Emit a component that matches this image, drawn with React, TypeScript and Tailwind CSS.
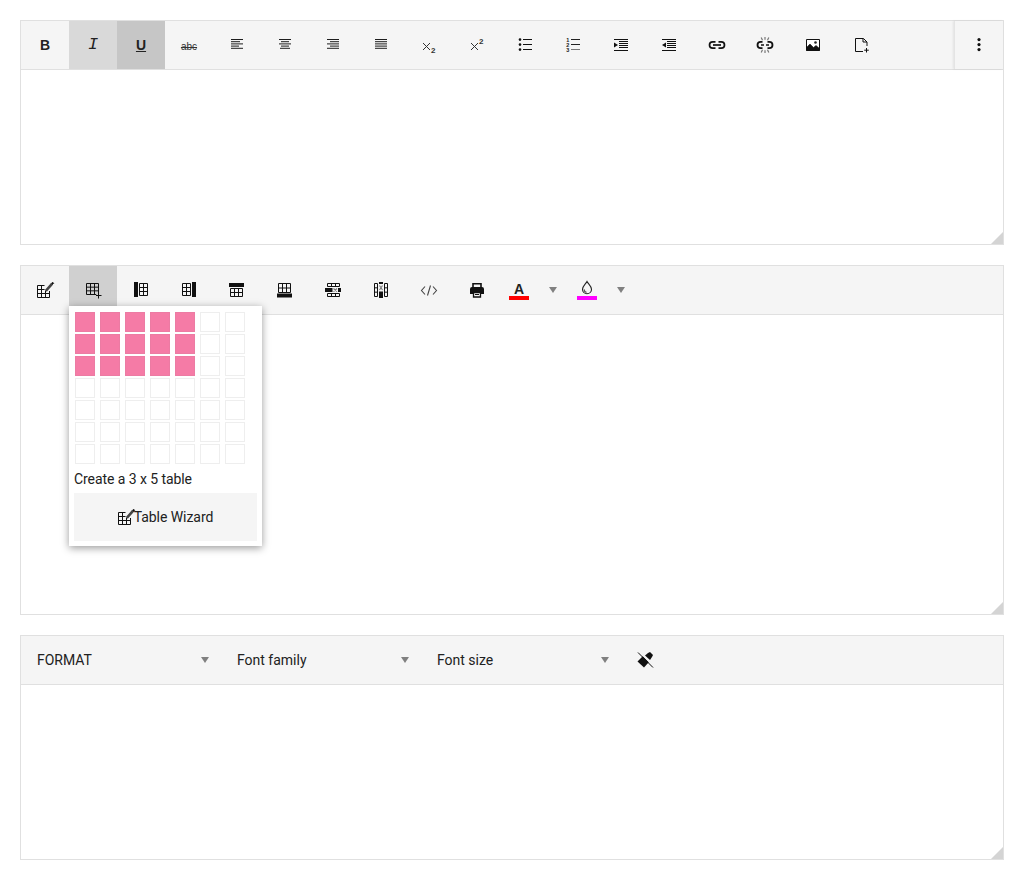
import React from "react";

const D = "#212121";

function Ico({ children }: { children: React.ReactNode }) {
  return (
    <svg width="24" height="24" viewBox="0 0 24 24" fill="none" stroke={D} strokeWidth="1" className="block">
      {children}
    </svg>
  );
}

function Btn({ children, bg = "" }: { children: React.ReactNode; bg?: string }) {
  return <div className={`w-12 h-12 shrink-0 flex items-center justify-center ${bg}`}>{children}</div>;
}

function Lines({ spec }: { spec: [number, number][] }) {
  return (
    <Ico>
      {spec.map(([a, b], i) => (
        <path key={i} d={`M${a} ${6.5 + i * 2.2}H${b}`} strokeWidth="0.95" stroke="#111" />
      ))}
    </Ico>
  );
}

function Script({ sup }: { sup?: boolean }) {
  return (
    <Ico>
      <path d="M6 10l7 7M13 10l-7 7" strokeWidth="1" stroke="#333" />
      <text
        x="14"
        y={sup ? 10.5 : 19.5}
        fontSize="8"
        fontWeight="700"
        fontFamily="'Liberation Sans', sans-serif"
        fill="#333"
        stroke="none"
      >
        2
      </text>
    </Ico>
  );
}

function Grid({ x, y, w, h, cols, rows }: { x: number; y: number; w: number; h: number; cols: number; rows: number }) {
  const v = Array.from({ length: cols + 1 }, (_, i) => x + (w * i) / cols);
  const r = Array.from({ length: rows + 1 }, (_, i) => y + (h * i) / rows);
  return (
    <g strokeWidth="1">
      {v.map((a) => (
        <path key={"v" + a} d={`M${a} ${y}V${y + h}`} />
      ))}
      {r.map((b) => (
        <path key={"h" + b} d={`M${x} ${b}H${x + w}`} />
      ))}
    </g>
  );
}

const Bullets = () => (
  <Ico>
    <g fill="#111" stroke="none">
      <circle cx="7" cy="6.6" r="1.3" />
      <circle cx="7" cy="11.6" r="1.3" />
      <circle cx="7" cy="16.6" r="1.3" />
    </g>
    <path d="M10 6.500h9M10 11.500h9M10 16.500h9" stroke="#111" />
  </Ico>
);

const Numbers = () => (
  <Ico>
    <g fontSize="5.500" fontWeight="700" fontFamily="'Liberation Sans', sans-serif" fill="#222" stroke="none">
      <text x="5.200" y="8.500">1</text>
      <text x="5.200" y="13.500">2</text>
      <text x="5.200" y="18.500">3</text>
    </g>
    <path d="M10 6.500h9M10 11.500h9" stroke="#222" />
    <path d="M10 16.500h9" stroke="#777" />
  </Ico>
);

const Indent = ({ out }: { out?: boolean }) => (
  <Ico>
    <path d="M5 6.500h14M10 8.500h9M10 10.500h9M10 12.500h9M10 14.500h9M5 17.500h14" stroke="#111" />
    <path d={out ? "M9 9.500v5l-4-2.500z" : "M5 9.500v5l4-2.500z"} fill="#111" stroke="none" />
  </Ico>
);

const LinkIcon = () => (
  <Ico>
    <g strokeWidth="1.700" stroke="#111">
      <path d="M10.500 8.800H7.700a3.200 3.200 0 0 0 0 6.400h2.800M13.500 8.800h2.800a3.200 3.200 0 0 1 0 6.400h-2.800" />
      <path d="M8 12h8" />
    </g>
  </Ico>
);

const Unlink = () => (
  <Ico>
    <path d="M9.500 8.800H7.700a3.200 3.200 0 0 0 0 6.400h1.800M14.500 8.800h1.800a3.200 3.200 0 0 1 0 6.400h-1.800" strokeWidth="1.800" stroke="#111" />
    <path d="M8 12h3M13 12h3" strokeWidth="1.400" stroke="#111" />
    <path d="M9.500 7.200L8.200 4.500M12 6.800V4M14.500 7.200l1.300-2.700M9.500 16.800l-1.300 2.700M12 17.200V20M14.500 16.800l1.300 2.700" stroke="#777" strokeWidth="1.200" />
  </Ico>
);

const ImageIcon = () => (
  <Ico>
    <path d="M5.500 6.500h13v11h-13z" fill="#fff" stroke="#111" strokeWidth="1" />
    <path d="M5.500 17.500v-3l3.500-3.500 3.500 3.500 2.500-2 3.500 3v2z" fill="#111" stroke="#111" strokeWidth="0.6" />
    <circle cx="14.500" cy="9.500" r="1.300" fill="#222" stroke="none" />
  </Ico>
);

const NewFile = () => (
  <Ico>
    <path d="M14 18.500H6.500v-13h8l3.500 3.500v4M14 5.500V9h4" stroke="#111" strokeWidth="1" />
    <path d="M17.500 15v4.500M15.200 17.200h4.600" stroke="#111" />
  </Ico>
);

const More = () => (
  <Ico>
    <g fill="#111" stroke="none">
      <circle cx="12" cy="6.600" r="1.600" />
      <circle cx="12" cy="11.600" r="1.600" />
      <circle cx="12" cy="16.600" r="1.600" />
    </g>
  </Ico>
);

const Wizard = () => (
  <svg width="24" height="24" viewBox="0 0 24 24" fill="none" className="block shrink-0">
    <path
      d="M4.500 7.500h7M4.500 7.500v12M4.500 11.500h8M4.500 15.500h12M4.500 19.500h12M8.500 7.500v12M12.500 11.500v8M16.500 13v6.500"
      stroke="#111"
    />
    <path d="M12.800 12.800l6-6.600" stroke="#f5f5f5" strokeWidth="4" />
    <path d="M12.800 12.800l6-6.600" stroke="#444" strokeWidth="2.600" />
    <path d="M18.300 5.500l1.300-1.300 1.100 1.100-1.300 1.300z" fill="#111" stroke="#111" strokeWidth="0.8" />
  </svg>
);

const TableAdd = () => (
  <Ico>
    <g stroke="#111">
      <Grid x={5.5} y={5.5} w={12} h={11} cols={3} rows={3} />
      <path d="M17.500 15v5.500M15 17.700h5.500" stroke="#d0d0d0" strokeWidth="3" />
      <path d="M17.500 15v5.500M15 17.500h5.500" />
    </g>
  </Ico>
);

const ColBefore = () => (
  <Ico>
    <path d="M5 4h4v15H5z" fill="#111" stroke="none" />
    <g stroke="#111"><Grid x={10.5} y={5.5} w={8} h={12} cols={2} rows={3} /></g>
  </Ico>
);

const ColAfter = () => (
  <Ico>
    <g stroke="#111"><Grid x={5.5} y={5.5} w={8} h={12} cols={2} rows={3} /></g>
    <path d="M15 4h4v15h-4z" fill="#111" stroke="none" />
  </Ico>
);

const RowBefore = () => (
  <Ico>
    <path d="M4 5h15v4H4z" fill="#111" stroke="none" />
    <g stroke="#111"><Grid x={5.5} y={10.5} w={12} h={8} cols={3} rows={2} /></g>
  </Ico>
);

const RowAfter = () => (
  <Ico>
    <g stroke="#111"><Grid x={5.5} y={5.5} w={12} h={9} cols={3} rows={2} /></g>
    <path d="M4 15.500h15v4H4z" fill="#111" stroke="none" />
  </Ico>
);

const DelRow = () => (
  <Ico>
    <g stroke="#111">
      <Grid x={6.5} y={5.5} w={12} h={3} cols={3} rows={1} />
      <Grid x={6.5} y={15.5} w={12} h={3} cols={3} rows={1} />
    </g>
    <path d="M4 10h7.500v4H4zM17 10h3v4h-3z" fill="#111" stroke="none" />
    <path d="M12.500 10.500l3.500 3M16 10.500l-3.500 3" stroke="#777" strokeWidth="1.100" />
  </Ico>
);

const DelCol = () => (
  <Ico>
    <g stroke="#111">
      <Grid x={5.5} y={5.5} w={3} h={13} cols={1} rows={3} />
      <Grid x={15.5} y={5.5} w={3} h={13} cols={1} rows={3} />
    </g>
    <path d="M10 4h4v2h-4zM10 13.500h4V20h-4z" fill="#111" stroke="none" />
    <path d="M10.500 7.500l3 4.500M13.500 7.500l-3 4.500" stroke="#777" strokeWidth="1.100" />
  </Ico>
);

const Code = () => (
  <Ico>
    <path d="M8 8.500L4.500 12.500 8 16.500M16 8.500l3.500 4-3.500 4M13.500 7.500l-3 10" stroke="#444" strokeWidth="1.100" />
  </Ico>
);

const Printer = () => (
  <Ico>
    <path d="M8 9.500V5.800h8v3.700" stroke="#111" strokeWidth="1.600" />
    <path d="M5 11a2 2 0 0 1 2-2h10a2 2 0 0 1 2 2v5h-3v-2H8v2H5z" fill="#111" stroke="none" />
    <path d="M8.500 14.500h7v4.500h-7z" stroke="#111" strokeWidth="1.300" fill="#f5f5f5" />
    <path d="M10 16.500h4" stroke="#111" />
  </Ico>
);

const Drop = () => (
  <svg width="24" height="24" viewBox="0 0 24 24" fill="none" className="block">
    <path d="M12 3.500c-1.500 2.700-4.500 4.800-4.500 7.800a4.500 4.500 0 0 0 9 0c0-3-3-5.100-4.500-7.800z" stroke="#222" strokeWidth="1.100" />
    <path d="M9.300 11.300a2.700 2.700 0 0 0 2.200 3" stroke="#555" strokeWidth="1.200" />
  </svg>
);

const Eraser = () => (
  <Ico>
    <path d="M4.500 13.500L10 8l6 6-5 5.500z" fill="#111" stroke="none" />
    <path d="M12 7.500L15 5l2-1 3 3-1 2-2 3z" fill="#111" stroke="none" />
    <path d="M6 3.500l15 15" stroke="#f5f5f5" strokeWidth="1.200" />
    <path d="M5 4.500l15 15" stroke="#111" strokeWidth="1" />
  </Ico>
);

const Caret = () => <div className="w-0 h-0 border-x-[4.5px] border-x-transparent border-t-[6px] border-t-[#808080]" />;

function ColorBtn({ color, children }: { color: string; children: React.ReactNode }) {
  return (
    <>
      <div className="w-9 h-12 shrink-0 relative flex items-center justify-center">
        {children}
        <div className="absolute left-2 top-[30px] w-5 h-1" style={{ backgroundColor: color }} />
      </div>
      <div className="w-8 h-12 shrink-0 flex items-center justify-center">
        <Caret />
      </div>
    </>
  );
}

function Select({ label }: { label: string }) {
  return (
    <div className="w-[200px] h-12 shrink-0 flex items-center justify-between pl-4 pr-3 text-sm text-[#212121]">
      <span>{label}</span>
      <Caret />
    </div>
  );
}

function Editor({ height, toolbar, children }: { height: string; toolbar: React.ReactNode; children?: React.ReactNode }) {
  return (
    <div className={`relative flex flex-col border border-[#e0e0e0] bg-white ${height}`}>
      <div className="flex h-[49px] shrink-0 border-b border-[#e0e0e0] bg-[#f5f5f5]">{toolbar}</div>
      {children}
      <svg width="12" height="12" viewBox="0 0 12 12" className="absolute right-0 bottom-0">
        <path d="M12 0V12H0z" fill="#d4d4d4" />
      </svg>
    </div>
  );
}

function TablePicker() {
  return (
    <div className="absolute left-12 top-10 z-10 w-[193px] h-[240px] bg-white px-[5px] pt-[5px] shadow-[0_2px_8px_rgba(0,0,0,0.4)]">
      <div className="grid grid-cols-[repeat(7,20px)] auto-rows-[20px] gap-x-[5px] gap-y-[2px] ml-px mt-px">
        {Array.from({ length: 49 }, (_, i) => {
          const on = i % 7 < 5 && i < 21;
          return (
            <div
              key={i}
              className={on ? "border border-[#ec7ba3] bg-[#f57ba6]" : "border border-[#eeeeee] bg-white"}
            />
          );
        })}
      </div>
      <div className="mt-[5px] h-[20px] leading-5 text-sm tracking-[-0.07px] text-[#212121]">Create a 3 x 5 table</div>
      <div className="mt-1 h-12 w-[183px] flex items-center justify-center bg-[#f5f5f5] text-sm tracking-[-0.05px] text-[#212121]">
        <div className="-mx-1">
          <Wizard />
        </div>
        <span>Table Wizard</span>
      </div>
    </div>
  );
}

export default function App() {
  return (
    <div className="w-[1024px] h-[880px] bg-white p-5 flex flex-col gap-5 font-['Roboto',sans-serif] text-[#212121]">
      <Editor
        height="h-[225px]"
        toolbar={
          <>
            <Btn>
              <span className="font-['Liberation_Sans',sans-serif] font-bold text-sm text-[#222]">B</span>
            </Btn>
            <Btn bg="bg-[#d9d9d9]">
              <span className="font-['Liberation_Mono',monospace] italic text-[17px] text-[#222]">I</span>
            </Btn>
            <Btn bg="bg-[#c6c6c6]">
              <span className="font-['Liberation_Sans',sans-serif] font-bold text-sm underline text-[#222]">U</span>
            </Btn>
            <Btn>
              <span className="font-['Liberation_Sans',sans-serif] text-[10px] line-through text-[#333] pt-[3px]">abc</span>
            </Btn>
            <Btn><Lines spec={[[6, 18], [6, 15], [6, 18], [6, 14], [6, 18]]} /></Btn>
            <Btn><Lines spec={[[6, 18], [8, 16], [6, 18], [8, 16], [7, 17]]} /></Btn>
            <Btn><Lines spec={[[6, 18], [9, 18], [6, 18], [9, 18], [6, 18]]} /></Btn>
            <Btn><Lines spec={[[6, 18], [6, 18], [6, 18], [6, 18], [6, 18]]} /></Btn>
            <Btn><Script /></Btn>
            <Btn><Script sup /></Btn>
            <Btn><Bullets /></Btn>
            <Btn><Numbers /></Btn>
            <Btn><Indent /></Btn>
            <Btn><Indent out /></Btn>
            <Btn><LinkIcon /></Btn>
            <Btn><Unlink /></Btn>
            <Btn><ImageIcon /></Btn>
            <Btn><NewFile /></Btn>
            <div className="flex-1" />
            <div className="w-[49px] h-12 flex items-center justify-center border-l border-[#e4e4e4] shadow-[-1px_0_2px_rgba(0,0,0,0.08)]">
              <More />
            </div>
          </>
        }
      />
      <Editor
        height="h-[350px]"
        toolbar={
          <>
            <Btn><Wizard /></Btn>
            <Btn bg="bg-[#d0d0d0]"><TableAdd /></Btn>
            <Btn><ColBefore /></Btn>
            <Btn><ColAfter /></Btn>
            <Btn><RowBefore /></Btn>
            <Btn><RowAfter /></Btn>
            <Btn><DelRow /></Btn>
            <Btn><DelCol /></Btn>
            <Btn><Code /></Btn>
            <Btn><Printer /></Btn>
            <ColorBtn color="#ff0000">
              <span className="font-['Liberation_Sans',sans-serif] font-bold text-sm leading-none text-[#222] -mt-[3px]">A</span>
            </ColorBtn>
            <ColorBtn color="#ff00ff">
              <Drop />
            </ColorBtn>
          </>
        }
      >
        <TablePicker />
      </Editor>
      <Editor
        height="h-[225px]"
        toolbar={
          <>
            <Select label="FORMAT" />
            <Select label="Font family" />
            <Select label="Font size" />
            <Btn><Eraser /></Btn>
          </>
        }
      />
    </div>
  );
}
